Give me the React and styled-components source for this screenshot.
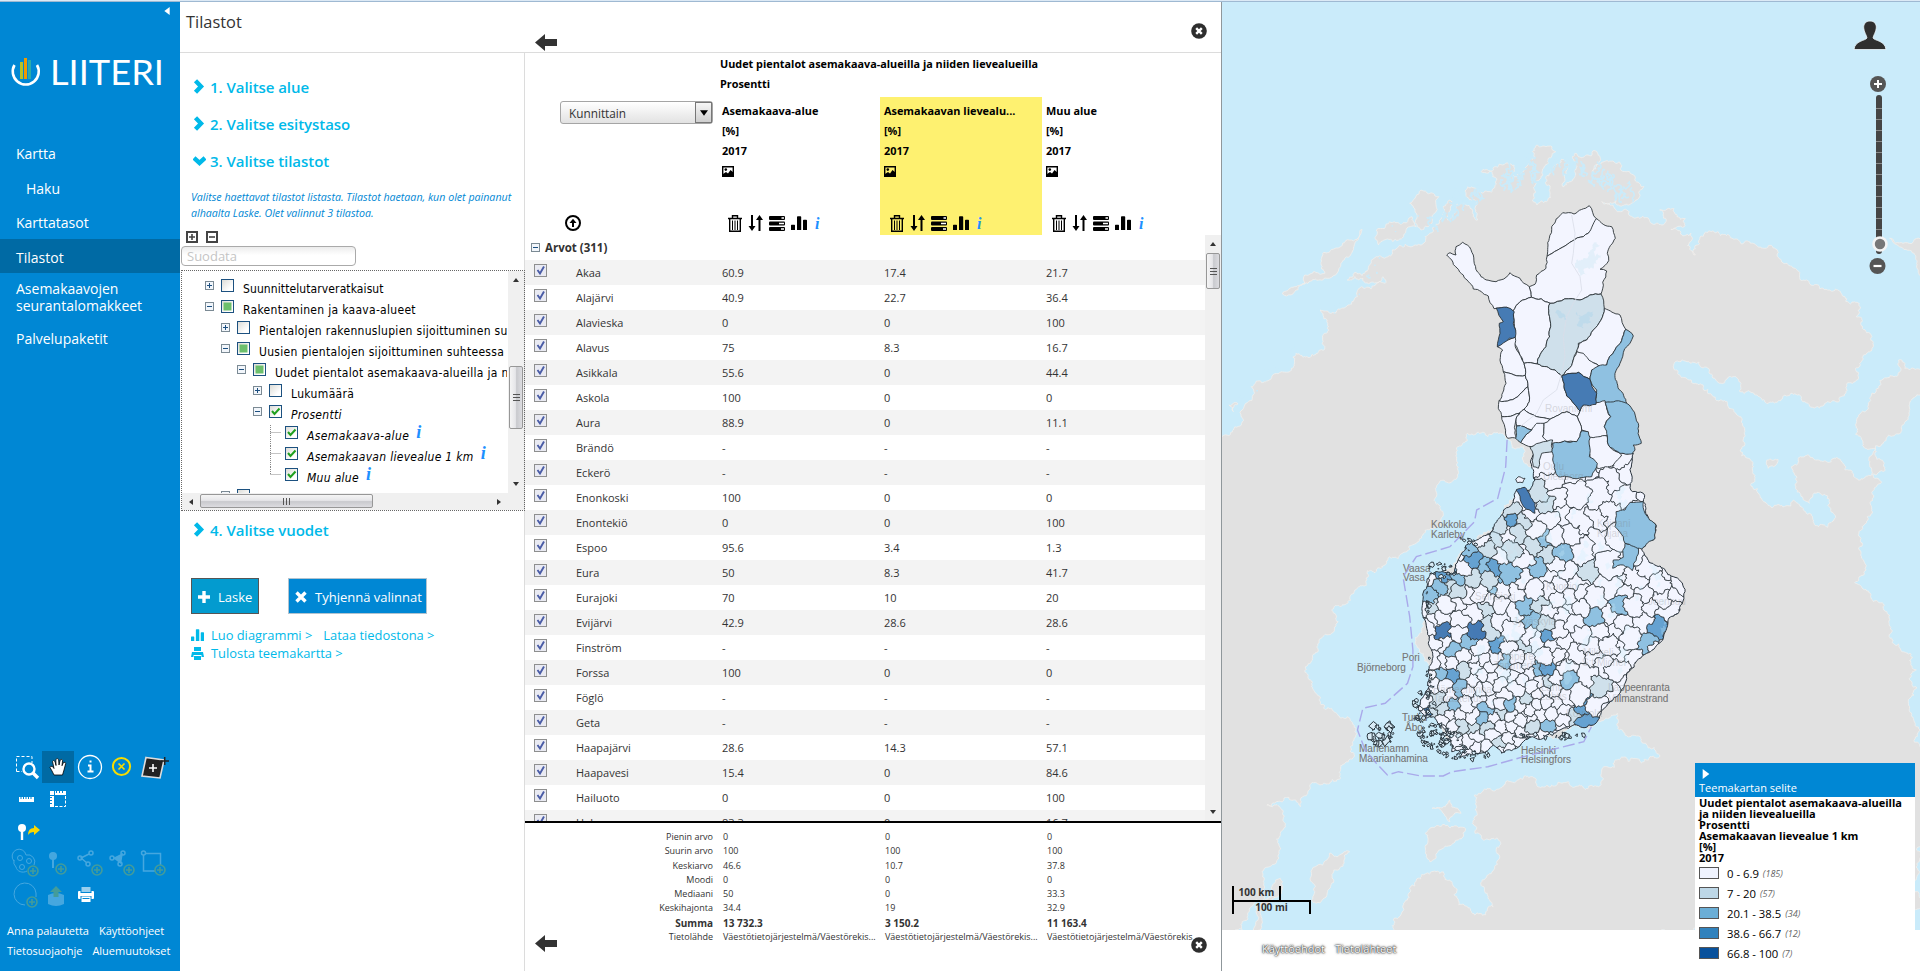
import React from "react";
import styled, { createGlobalStyle, css } from "styled-components";

const BLUE = "#0087d4";
const CYAN = "#00b9e9";
const SANS = '"Open Sans", "Noto Sans", sans-serif';

const Global = createGlobalStyle`
  * { box-sizing: border-box; }
  body { margin: 0; font-family: ${SANS}; background: #fff; overflow: hidden; }
`;

/* ---------- page frame ---------- */
const Page = styled.div`
  width: 1920px; height: 971px; display: flex; flex-direction: column; overflow: hidden;
`;
const TopStrip = styled.div`
  height: 2px; flex: none; background: #dce9f5; border-bottom: 1px solid #9fb9d2;
`;
const Columns = styled.div`display: flex; height: 969px;`;

/* ---------- sidebar ---------- */
const Sidebar = styled.aside`
  width: 180px; height: 100%; background: ${BLUE}; color: #fff; display: flex; flex-direction: column; flex: none;
`;
const Collapse = styled.div`
  height: 18px; padding: 5px 9px 0 0; display: flex; justify-content: flex-end;
`;
const Logo = styled.div`height: 116px; padding: 37px 0 0 11px; svg { overflow: visible; }`;
const NavItem = styled.div`
  height: ${(p) => p.$h || 34}px; flex: none; display: flex; align-items: center;
  padding-left: ${(p) => (p.$sub ? 26 : 16)}px; font-size: 14px; line-height: 17px; white-space: pre-line;
  background: ${(p) => (p.$active ? "#006aa4" : "transparent")};
  padding-top: ${(p) => (p.$active ? 2 : 0)}px;
`;
const Tools = styled.div`
  margin-top: auto; padding-left: 10px; display: grid; grid-template-columns: repeat(5, 32px); grid-auto-rows: 32px;
`;
const Tool = styled.div`
  background: ${(p) => (p.$active ? "#006aa4" : "transparent")}; opacity: ${(p) => (p.$off ? 0.27 : 1)};
  svg { display: block; overflow: visible; }
`;
const FootLinks = styled.div`
  height: 60px; padding: 10px 0 0 7px; font-size: 11px; line-height: 20px; white-space: nowrap;
  span { margin-right: 10px; }
`;

/* ---------- statistics panel ---------- */
const Work = styled.main`
  width: 1042px; flex: none; display: flex; flex-direction: column; border-right: 1px solid #8f979b; background: #fff;
`;
const WorkHead = styled.header`
  height: 51px; flex: none; border-bottom: 1px solid #dcdcdc; display: flex; color: #333;
`;
const Title = styled.h1`
  margin: 0; width: 345px; padding: 8px 0 0 6px; font-size: 16.4px; line-height: 24px; font-weight: 400;
`;
const HeadIcons = styled.div`
  flex: 1; display: flex; justify-content: space-between; padding: 21px 14px 0 10px;
  svg:first-child { margin-top: 11px; }
`;
const WorkBody = styled.div`display: flex; flex: 1; min-height: 0;`;
const Steps = styled.section`
  width: 345px; flex: none; border-right: 1px solid #dcdcdc; padding-top: 15px; display: flex; flex-direction: column;
`;
const Step = styled.div`
  height: ${(p) => p.$h || 37}px; padding-left: 13px; display: flex; align-items: center; gap: 4px; flex: none;
  font-size: 15px; font-weight: 600; letter-spacing: -0.05px; color: ${CYAN};
`;
const Hint = styled.p`
  margin: 9px 0 0; padding-left: 11px; font-size: 10.65px; line-height: 16px; font-style: italic; color: ${BLUE}; white-space: nowrap;
`;
const TreeTools = styled.div`display: flex; gap: 8px; padding: 10px 0 4px 6px; height: 25px;`;
const Filter = styled.div`
  width: 175px; height: 20px; margin-left: 1px; border: 1px solid #aaa; border-radius: 4px; flex: none;
  background: linear-gradient(#ececec, #fff 8px); color: #c4c4c4; font-size: 13px; line-height: 18px; padding-left: 5px;
`;
const Tree = styled.div`
  margin: 4px 0 0 1px; width: 344px; height: 241px; flex: none; border: 1px dotted #666;
  display: grid; grid-template-columns: 1fr 16px; grid-template-rows: 222px 1fr; overflow: hidden;
`;
const TreeRows = styled.div`overflow: hidden; padding: 7px 0 0; width: 325px;`;
const TreeRow = styled.div`
  height: 21px; display: flex; align-items: flex-start; padding-left: ${(p) => 23 + p.$level * 16}px; white-space: nowrap;
  font-family: "DejaVu Sans Condensed", "DejaVu Sans", sans-serif; font-size: 12px; line-height: 21px; color: #000;
`;
const Branch = styled.span`
  width: 16px; height: 21px; flex: none; display: flex;
`;
const TreeText = styled.span`
  margin: 1px 0 0 9px; font-style: ${(p) => (p.$it ? "italic" : "normal")}; letter-spacing: ${(p) => p.$track}px;
`;
const Check = styled.span`
  width: 13px; height: 13px; margin-top: 1px; border: 1px solid #1c5180; flex: none; display: flex;
  background: linear-gradient(135deg, #dcdcd7, #fff 75%);
`;
const Info = styled.i`
  font-family: "Liberation Serif", serif; font-weight: 700; font-size: ${(p) => p.$s || 18}px; color: #1e90ff; line-height: 15px;
`;
const TreeInfo = styled(Info)`margin-left: 7px;`;

const VBar = styled.div`
  background: #f0f0f0; display: flex; flex-direction: column; align-items: center; width: 16px; position: relative;
  justify-content: space-between; padding: 6px 0;
`;
const HBar = styled.div`
  background: #f0f0f0; display: flex; align-items: center; justify-content: space-between; padding: 0 6px; position: relative;
  grid-column: 1 / -1;
  padding-right: 22px;
`;
const Thumb = styled.div`
  position: absolute; border: 1px solid #979797; border-radius: 2px; display: flex; align-items: center; justify-content: center;
  ${(p) =>
    p.$v
      ? css`left: 1px; width: 14px; top: ${p.$at}px; height: ${p.$len}px; background: linear-gradient(90deg, #f5f5f5, #e6e6e9 45%, #c9cace 55%, #dcdce0);`
      : css`top: 1px; height: 14px; left: ${p.$at}px; width: ${p.$len}px; background: linear-gradient(#f5f5f5, #e6e6e9 45%, #c9cace 55%, #dcdce0);`}
`;

const Actions = styled.div`display: flex; gap: 29px; padding: 30px 0 0 11px;`;
const Button = styled.div`
  height: 36px; width: ${(p) => p.$w}px; display: flex; align-items: center; gap: ${(p) => p.$gap}px; padding: 1px 0 0 6px;
  color: #fff; font-size: 13px; white-space: nowrap; flex: none;
  background: ${(p) => (p.$primary ? "#039bcf" : BLUE)}; border: 1px solid ${(p) => (p.$primary ? "#555" : "#b0c3d0")};
`;
const Links = styled.div`padding: 12px 0 0 11px; color: ${CYAN}; font-size: 12.9px; line-height: 18px;`;
const LinkRow = styled.div`
  display: flex; align-items: center; gap: 7px; height: 18px; white-space: nowrap;
  span + span { margin-left: 4px; }
`;

/* ---------- table ---------- */
const Table = styled.section`width: 696px; display: flex; flex-direction: column; color: #333;`;
const Group = styled.div`
  height: 44px; padding: 1px 0 0 195px; font-size: 10.85px; font-weight: 700; color: #000; line-height: 20px; white-space: nowrap;
`;
const HeadRow = styled.div`display: grid; grid-template-columns: 193px 162px 162px 163px; height: 138px;`;
const FirstCell = styled.div`
  padding: 4px 0 3px 35px; display: flex; flex-direction: column; justify-content: space-between;
`;
const Select = styled.div`
  width: 153px; height: 23px; border: 1px solid #a5a5a5; border-radius: 3px; font-size: 11.8px; color: #333; padding-left: 8px;
  display: flex; align-items: center; justify-content: space-between; background: linear-gradient(#fff, #e2e2e2);
`;
const SelectBtn = styled.span`
  width: 17px; height: 21px; border: 1px solid #777; background: linear-gradient(#f6f6f6, #cfcfcf);
  display: flex; align-items: center; justify-content: center;
`;
const ColHead = styled.div`
  padding: 4px 4px 0; font-size: 10.9px; font-weight: 700; line-height: 20px; color: #000;
  background: ${(p) => (p.$hot ? "#fef170" : "transparent")};
  div { white-space: nowrap; }
  & > svg { display: block; margin-top: 5px; }
`;
const ColTools = styled.div`
  display: flex; align-items: center; gap: 6px; padding-left: 6px; margin-top: 37px; height: 18px;
  i { margin-left: 2px; }
`;
const ListWrap = styled.div`display: flex; height: 586px; overflow: hidden;`;
const List = styled.div`flex: 1; overflow: hidden;`;
const GroupRow = styled.div`
  height: 25px; display: flex; align-items: center; gap: 5px; padding-left: 6px; font-size: 11.5px; font-weight: 700; color: #333;
`;
const Row = styled.div`
  height: 25px; display: grid; grid-template-columns: 51px 146px 162px 162px 1fr; align-items: center; font-size: 11px;
  background: ${(p) => (p.$odd ? "#f3f3f3" : "#fff")}; line-height: 25px;
`;
const RowCheck = styled.span`
  width: 13px; height: 13px; margin: -5px 0 0 9px; border: 1px solid #8e8f8f; background: #e9eaf2; display: flex;
`;
const Stats = styled.div`
  border-top: 2px solid #000; height: 148px; padding-top: 7px; display: flex; flex-direction: column; position: relative;
`;
const Stat = styled.div`
  display: grid; grid-template-columns: 188px 162px 162px 1fr; column-gap: 0; height: 14.3px; line-height: 14.3px; font-size: 9px;
  font-weight: ${(p) => (p.$b ? 700 : 400)}; ${(p) => p.$b && "font-size: 10px;"}
  white-space: nowrap;
  span { padding-left: 10px; }
  span:first-child { text-align: right; padding-left: 0; }
`;
const StatIcon = styled.div`
  position: absolute; top: ${(p) => p.$y}px; ${(p) => (p.$right ? "right: 14px;" : "left: 10px;")}
  svg { display: block; }
`;

/* ---------- map ---------- */
const MapPane = styled.section`width: 698px; height: 969px; position: relative; overflow: hidden; background: #fff;`;
const MapSvg = styled.svg`display: block;`;
const Over = styled.div`position: absolute; ${(p) => p.$pos}`;
const Legend = styled(Over)`width: 220px; height: 208px; background: #fff; color: #000;`;
const LegendHead = styled.div`
  background: ${BLUE}; color: #fff; height: 34px; font-size: 11px; padding: 6px 0 0 4px; line-height: 14px;
  svg { display: block; margin: 0 0 2px 2px; height: 10px; }
`;
const LegendTitle = styled.div`padding: 0 0 0 4px; font-size: 11px; font-weight: 700; line-height: 11px; height: 66px; white-space: pre;`;
const LegendRow = styled.div`
  height: 20px; display: flex; align-items: center; padding-left: 4px; font-size: 11.3px; gap: 4px;
  i { font-size: 9px; color: #666; }
`;
const Swatch = styled.span`width: 20px; height: 12px; border: 1px solid #555; background: ${(p) => p.$c}; margin-right: 4px;`;
const ScaleKm = styled.div`
  width: 49px; height: 14px; border: solid #000; border-width: 0 2px; font-size: 10px; font-weight: 700; text-align: center; line-height: 13px; color: #333;
`;
const ScaleMi = styled(ScaleKm)`width: 79px; border-width: 2px 2px 0; line-height: 11px;`;
const MapLinks = styled(Over)`
  display: flex; gap: 10px; font-size: 11px; line-height: 14px; color: #fff;
  text-shadow: 0 0 1px #222, 0 0 2px #333, 0 0 3px #666;
`;

/* ---------- icons ---------- */
const Tri = ({ d, c = "#333", s = 6 }) => (
  <svg width={s} height={s} viewBox="0 0 6 6">
    <path d={{ up: "M0 5L3 1L6 5Z", down: "M0 1L3 5L6 1Z", left: "M5 0L1 3L5 6Z", right: "M1 0L5 3L1 6Z" }[d]} fill={c} />
  </svg>
);
const Grip = ({ v }) => (
  <svg width="9" height="9" viewBox="0 0 9 9" stroke="#555">
    <path d={v ? "M1 1.5H8M1 4.5H8M1 7.5H8" : "M1.5 1V8M4.5 1V8M7.5 1V8"} />
  </svg>
);
const BackArrow = () => (
  <svg width="22" height="17" viewBox="0 0 22 17"><path d="M0 8.5L10 0V5H22V12H10V17Z" fill="#333" /></svg>
);
const CloseIcon = () => (
  <svg width="16" height="16" viewBox="0 0 16 16">
    <circle cx="8" cy="8" r="7.8" fill="#2e2e2e" />
    <path d="M5.2 5.2L10.8 10.8M10.8 5.2L5.2 10.8" stroke="#fff" strokeWidth="2.4" />
  </svg>
);
const Chevron = ({ down }) => (
  <svg width="13" height="15" viewBox="0 0 13 15" fill="none" stroke={CYAN} strokeWidth="4.4">
    <path d={down ? "M1 4L6.5 9L12 4" : "M2.5 1.8L8 7.5L2.500 13.2"} />
  </svg>
);
const Expander = ({ open, s = 9 }) => (
  <svg width={s} height={s} viewBox="0 0 9 9" fill="none">
    <rect x=".5" y=".5" width="8" height="8" fill="#f2f6fb" stroke="#7b8a94" />
    <path d={open ? "M2 4.5H7" : "M2 4.5H7M4.5 2V7"} stroke="#1c4f80" />
  </svg>
);
const BoxBtn = ({ minus }) => (
  <svg width="12" height="12" viewBox="0 0 12 12" fill="none" stroke="#444" strokeWidth="2">
    <path d="M1 1H11V11H1Z" /><path d={minus ? "M3 6H9" : "M3 6H9M6 3V9"} strokeWidth="1.6" />
  </svg>
);
const ChartIcon = ({ c = "#000", w = 16, h = 16 }) => (
  <svg width={w} height={h} viewBox="0 0 16 16" preserveAspectRatio="none" fill={c}>
    <path d="M0 10.5q0-.5.5-.5h3q.5 0 .5.5V16H0zM6 1q0-.8.8-.8h2.600q.8 0 .8.8V16H6zM12 5q0-.8.8-.8h2.400q.8 0 .8.8V16H12z" />
  </svg>
);
const PrintIcon = ({ c }) => (
  <svg width="13" height="13" viewBox="0 0 13 13" fill={c}>
    <path d="M3 0H10V4H3ZM1 5H12L13 10H10.500V8H2.500V10H0ZM3 9H10V13H3Z" />
  </svg>
);
const ImgIcon = () => (
  <svg width="12" height="11" viewBox="0 0 12 11">
    <path d="M.7.7H11.300V10.300H.7Z" fill="none" stroke="#000" strokeWidth="1.4" />
    <circle cx="3.800" cy="3.600" r="1.300" /><path d="M1 10V8L4 6L6 7.500L8.500 4L11.500 6.500V10Z" />
  </svg>
);
const TrashIcon = () => (
  <svg width="14" height="17" viewBox="0 0 14 17" fill="none" stroke="#000">
    <path d="M0 3.500H14M4.500 3V.7H9.500V3" strokeWidth="1.400" /><path d="M1.700 4V16.300H12.300V4" strokeWidth="1.400" />
    <path d="M4.500 5.500V15M7 5.500V15M9.500 5.500V15" />
  </svg>
);
const SortIcon = () => (
  <svg width="15" height="16" viewBox="0 0 15 16">
    <path d="M4 0V13M11.500 3V16" stroke="#000" strokeWidth="2" /><path d="M.5 11H7.500L4 16ZM8 5H15L11.500 0Z" />
  </svg>
);
const BarsIcon = () => (
  <svg width="16" height="15" viewBox="0 0 16 15">
    <rect width="16" height="4" rx="1" /><rect y="5.500" width="16" height="4" rx="1" /><rect y="11" width="16" height="4" rx="1" />
    <path d="M12.500 1.200h2.500v1.600h-2.500zM10 6.700h5v1.600H10zM12 12.200h3v1.600h-3z" fill="#fff" />
  </svg>
);
const UpCircle = () => (
  <svg width="16" height="16" viewBox="0 0 16 16" fill="none" stroke="#000" strokeWidth="2">
    <circle cx="8" cy="8" r="7" /><path d="M8 12V6" /><path d="M4.500 8L8 3.800L11.500 8Z" fill="#000" stroke="none" />
  </svg>
);
const Plus = ({ x = 24, y = 23 }) => (
  <g stroke="#f7d400" fill="none" strokeWidth="1.600"><circle cx={x} cy={y} r="5" /><path d={`M${x - 3} ${y}h6M${x} ${y - 3}v6`} /></g>
);
const W = { fill: "none", stroke: "#fff" };

const toolIcons = [
  { el: <><path d="M6.500 20.500V5.500H22V12" strokeDasharray="3 2" {...W} /><path d="M6.500 20.500H12" strokeDasharray="3 2" {...W} /><circle cx="19" cy="18" r="5.500" {...W} strokeWidth="2.400" /><path d="M23 22L28 27" {...W} strokeWidth="3.400" /></> },
  { on: 1, el: <path d="M12 24L10 20L8 16.500Q8.500 14.500 10.500 15.500L12 17.500L10.500 10.500Q11.500 8.500 13 10.500L14 14.500L13.800 8.500Q15.200 6.500 16.600 8.500L17 14L18.200 9Q19.800 7.500 20.600 9.500L20 14.700L21.500 11.500Q23.500 10.500 23.700 12.500L22 19L20.500 24Z" fill="#fff" stroke="#000" strokeWidth=".8" /> },
  { el: <><circle cx="16" cy="16" r="11.500" {...W} strokeWidth="1.300" /><path d="M16.500 9.500V11.500M14 14.500H16.500V20.500M13.500 20.500H19.500" {...W} strokeWidth="2" /></> },
  { el: <g stroke="#f7dc00" fill="none" strokeWidth="2"><circle cx="15.500" cy="15.500" r="8.600" /><path d="M12.500 12.500L18.500 18.500M18.500 12.500L12.500 18.500" strokeWidth="1.700" /></g> },
  { el: <><path d="M8 6.500L26 9L22 27L4 25Z" fill="#222" stroke="#ddd" strokeWidth="1.600" /><path d="M11 17H19M15 13V21" {...W} strokeWidth="1.600" /><path d="M22.500 10H31M26.700 6V14" stroke="#222" strokeWidth="1.500" /></> },
  { el: <path d="M9 14h1.500v2h1v-2h1.500v2h1v-2h1.500v2h1v-2H18v2h1v-2h1.500v2h1v-2H24v5H9z" fill="#fff" /> },
  { el: <><path d="M8 8h4v4H8zM13 8h1v2h1V8h2v2h1V8h2v2h1V8h3v4H13zM8 13v1h2v1H8v2h2v1H8v2h2v1H8v3h4V13z" fill="#fff" /><path d="M23.500 13V23.500H12" strokeDasharray="3 1.500" {...W} /></> },
  {}, {}, {},
  { el: <><circle cx="12" cy="13" r="4" fill="#fff" /><path d="M12 16V25" {...W} strokeWidth="2.400" /><path d="M18 20Q18 13 24 13V10L30 15L24 20V17Q20 17 18 20Z" fill="#fbd800" /></> },
  {}, {}, {}, {},
  { off: 1, el: <><g {...W}><path d="M4 14A7 7 0 1 1 16 8A7 7 0 0 1 24 18M4 13A7 7 0 0 0 6 20A7 6 0 0 0 17 24" /><circle cx="10" cy="11" r="2.500" /><circle cx="19" cy="14" r="2.500" /><circle cx="12" cy="20" r="2.500" /></g><Plus x={23} y={24} /></> },
  { off: 1, el: <><circle cx="11" cy="9" r="4" fill="#fff" /><path d="M11 12V21" {...W} strokeWidth="2" /><Plus x={19} y={22} /></> },
  { off: 1, el: <><g {...W} strokeWidth="1.500"><path d="M15 7L7 11L13 16" /><circle cx="17" cy="6" r="2" /><circle cx="6" cy="11" r="2" /><circle cx="14" cy="17" r="2" /></g><Plus x={23} y={23} /></> },
  { off: 1, el: <><path d="M7 11L17 6L15 17Z" fill="#fff" /><g {...W} strokeWidth="1.500"><circle cx="17" cy="6" r="2" /><circle cx="6" cy="11" r="2" /><circle cx="14" cy="17" r="2" /></g><Plus x={23} y={23} /></> },
  { off: 1, el: <><g {...W} strokeWidth="1.500"><path d="M7 6.500H22.500V18M5.500 8V24H17" /><circle cx="5.500" cy="6" r="2" /></g><Plus x={22} y={23} /></> },
  { off: 1, el: <><path d="M15 26A11 11 0 1 1 26 14V18" {...W} /><Plus x={22} y={23} /></> },
  { off: 1, el: <><path d="M6 16Q14 12 22 16V25Q14 29 6 25Z" fill="#fff" /><path d="M14 7L20 13H16.500V18H11.500V13H8Z" fill="#f7d400" /></> },
  { el: <g transform="translate(4 8)"><path d="M3.500 0H12.500V5H3.500Z" fill="#99cfee" /><path d="M0 5Q0 4 1 4H2.500V6H13.500V4H15Q16 4 16 5V11Q16 12 15 12H13.500V9H2.500V12H1Q0 12 0 11Z" fill="#fff" /><path d="M3.500 9.500H12.500V15H3.500Z" fill="#fff" /><path d="M4.500 11.500H11.500" stroke={BLUE} /></g> },
];

/* ---------- data ---------- */
const tree = [
  [0, "+", "", "Suunnittelutarveratkaisut", 0, 0, 0.1],
  [0, "-", "h", "Rakentaminen ja kaava-alueet"],
  [1, "+", "", "Pientalojen rakennuslupien sijoittuminen su"],
  [1, "-", "h", "Uusien pientalojen sijoittuminen suhteessa"],
  [2, "-", "h", "Uudet pientalot asemakaava-alueilla ja n"],
  [3, "+", "", "Lukumäärä", 0, 0, 0.35],
  [3, "-", "v", "Prosentti", 1],
  [4, "", "v", "Asemakaava-alue", 1, 1, 0.4],
  [4, "", "v", "Asemakaavan lievealue 1 km", 1, 1],
  [4, "", "v", "Muu alue", 1, 1],
  [1, "+", "", ""],
];
const rows = `Akaa|60.9|17.4|21.7
Alajärvi|40.9|22.7|36.4
Alavieska|0|0|100
Alavus|75|8.3|16.7
Asikkala|55.6|0|44.4
Askola|100|0|0
Aura|88.9|0|11.1
Brändö|-|-|-
Eckerö|-|-|-
Enonkoski|100|0|0
Enontekiö|0|0|100
Espoo|95.6|3.4|1.3
Eura|50|8.3|41.7
Eurajoki|70|10|20
Evijärvi|42.9|28.6|28.6
Finström|-|-|-
Forssa|100|0|0
Föglö|-|-|-
Geta|-|-|-
Haapajärvi|28.6|14.3|57.1
Haapavesi|15.4|0|84.6
Hailuoto|0|0|100
Halsua|83.3|0|16.7`.split("\n").map((l) => l.split("|"));
const src = "Väestötietojärjestelmä/Väestörekis";
const stats = [
  ["Pienin arvo", "0", "0", "0"],
  ["Suurin arvo", "100", "100", "100"],
  ["Keskiarvo", "46.6", "10.7", "37.8"],
  ["Moodi", "0", "0", "0"],
  ["Mediaani", "50", "0", "33.3"],
  ["Keskihajonta", "34.4", "19", "32.9"],
  ["Summa", "13 732.3", "3 150.2", "11 163.4"],
  ["Tietolähde", src + "...", src + "...", src],
];
const legend = [
  ["#eff3ff", "0 - 6.9", "(185)"],
  ["#bdd7e7", "7 - 20", "(57)"],
  ["#6baed6", "20.1 - 38.5", "(34)"],
  ["#3182bd", "38.6 - 66.7", "(12)"],
  ["#08519c", "66.8 - 100", "(7)"],
];

/* ---------- map geometry ---------- */
const rng = (s) => () => {
  s = (s + 0x6d2b79f5) | 0;
  let t = Math.imul(s ^ (s >>> 15), 1 | s);
  t = (t + Math.imul(t ^ (t >>> 7), 61 | t)) ^ t;
  return ((t ^ (t >>> 14)) >>> 0) / 4294967296;
};
const parse = (str, f) =>
  str.trim().split(/\s+/).map((p) => { const [x, y] = p.split(",").map(Number); return f(x, y); });
const wide = (x, y) => [1220 + x / 2.24, y / 3];
const north = (x, y) => [1420 + x / 3, 190 + y / 3];
const south = (x, y) => [1380 + x / 3, 470 + y / 3];
const line = (pts) => "M" + pts.map((p) => p[0].toFixed(1) + " " + p[1].toFixed(1)).join("L");

// Irregular edge between two points; both directions give the same curve.
function edge(a, b, amp, min) {
  const flip = a[0] > b[0] || (a[0] === b[0] && a[1] > b[1]);
  const [p, q] = flip ? [b, a] : [a, b];
  const r = rng(Math.round(p[0] * 7 + p[1] * 131 + q[0] * 17 + q[1] * 311));
  const rec = (u, v) => {
    const dx = v[0] - u[0], dy = v[1] - u[1], d = Math.hypot(dx, dy);
    if (d < min) return [v];
    const k = (r() - 0.5) * amp;
    const m = [(u[0] + v[0]) / 2 - dy * k, (u[1] + v[1]) / 2 + dx * k];
    return [...rec(u, m), ...rec(m, v)];
  };
  const out = [p, ...rec(p, q)];
  return flip ? out.reverse() : out;
}
const rough = (pts, amp, min, closed = true) => {
  const res = [];
  const n = closed ? pts.length : pts.length - 1;
  for (let i = 0; i < n; i++) res.push(...edge(pts[i], pts[(i + 1) % pts.length], amp, min).slice(0, -1));
  return line(res) + (closed ? "Z" : "");
};

const mainland = `4,1310 30,1290 50,1230 70,1160 110,1140 160,1105 170,1060 235,1040 240,960 225,930 300,900 325,865 370,850 365,830 320,835 285,840 300,820 350,770 400,740 430,740 460,725 480,680 500,620 515,600 510,660 540,610 560,625 577,660 570,600 550,590 555,560 600,575 620,540 585,515 640,490 660,505 655,535 670,520 690,495 700,455 730,440 752,455 735,490 700,600 710,615 740,520 765,478 775,482 768,560 795,530 800,500 795,460 840,452 848,490 835,520 870,485 910,515 950,560 940,590 915,615 855,605 890,635 940,655 990,675 1000,660 985,630 1042,655 1040,680 1010,688 1055,700 1065,765 1075,715 1200,735 1270,790 1300,840 1340,855 1400,890 1432,910 1425,950 1460,1010 1460,1050 1430,1130 1360,1205 1310,1205 1265,1185 1200,1185 1150,1130 1120,1150 1050,1085 1020,1085 1060,1150 1120,1200 1170,1270 1175,1290 1165,1350 1195,1400 1190,1450 1210,1490 1240,1520 1320,1540 1340,1580 1375,1560 1365,1500 1330,1480 1320,1510 1290,1460 1280,1400 1300,1370 1340,1380 1400,1410 1470,1425 1490,1410 1480,1380 1440,1330 1425,1270 1430,1250 1460,1180 1510,1130 1520,1080 1600,1100 1600,2800 388,2800 390,2755 420,2700 440,2640 500,2615 520,2650 535,2715 570,2745 612,2720 615,2600 628,2525 590,2520 565,2470 575,2420 570,2385 640,2345 700,2330 780,2345 850,2358 855,2310 900,2270 960,2280 985,2270 950,2230 895,2190 890,2140 860,2160 835,2180 740,2210 640,2240 560,2250 500,2200 470,2130 470,2000 470,1850 465,1750 520,1700 560,1640 650,1500 705,1470 700,1400 680,1340 640,1315 600,1310 555,1300 530,1380 485,1460 500,1540 440,1630 380,1670 300,1780 250,1830 250,1900 220,1950 205,2060 225,2110 250,2125 285,2150 300,2220 300,2260 280,2290 235,2350 200,2370 180,2420 105,2415 140,2440 135,2500 95,2630 100,2660 70,2720 50,2790 4,2800`;
const islets = [
  "205,2700 205,2620 245,2560 290,2555 255,2610 240,2680 215,2710",
  "460,2500 475,2482 530,2478 550,2490 545,2510 500,2545 470,2585 465,2530",
  "475,2425 505,2420 515,2400 535,2430 540,2440 515,2465 500,2440",
  "75,2790 120,2680 135,2635 138,2680 90,2790",
  "1500,715 1530,730 1600,735 1600,880 1565,820 1555,760",
  "140,882 190,825 235,820 230,760 270,740 318,688 300,740 270,800 240,835 190,850",
  "440,640 425,610 450,570 490,590 480,640 450,690",
  "350,690 380,665 430,650 440,680 400,720 355,735",
  "1225,1380 1250,1378 1240,1400 1228,1405", "20,1215 40,1212 30,1235",
];

const FILL = { w: "#f3f5ff", a: "#cfe0eb", b: "#8fc1e1", c: "#66a2d1", d: "#467bb4" };
const northern = `w 381,199 388,145 395,110 428,68 462,72 508,47 529,86 515,120 505,130
w 381,199 505,130 529,86 575,110 586,145 562,190 566,212 540,238 560,243 543,312 480,330 390,340 334,322 328,290 345,283 350,255 378,235
w 334,322 328,290 300,265 270,248 258,262 228,275 183,260 160,195 142,165 128,157 108,170 108,195 90,188 80,195 95,210 130,255 160,297 205,318 222,356 260,352 280,362 300,335
w 280,362 300,335 334,322 390,340 386,370 392,410 378,470 352,522 312,520 290,470 283,400
a 390,340 480,330 543,312 553,355 520,420 500,450 475,460 457,520 425,558 380,530 352,522 378,470 392,410 386,370
w 553,355 600,375 617,418 585,480 560,525 540,532 510,515 470,485 478,460 500,450 520,420
w 470,485 490,490 515,515 540,532 515,540 510,568 475,547 425,558 457,520
b 617,418 640,438 600,520 585,550 620,640 565,637 528,640 530,600 510,568 515,540 560,525 585,480
w 286,442 290,480 312,520 316,556 250,545 240,510 248,480 232,470
w 250,545 316,556 324,590 270,630 237,632 258,580
w 237,632 270,630 324,590 328,635 312,658 245,680 235,655
w 312,520 352,522 380,530 425,558 432,590 440,618 480,663 472,680 440,665 390,688 312,658 328,635 324,590 316,556
w 480,663 490,645 555,632 572,680 553,710 565,738 505,742 500,725 485,720 472,680
d 229,354 260,352 283,365 280,400 286,442 268,445 232,470 240,430 238,400 250,395
d 425,558 475,547 510,568 530,610 528,643 490,645 480,663 440,618 432,590
w 245,680 312,658 290,680 290,745 263,745
w 290,680 312,658 390,688 350,710 335,720 290,708
w 335,720 350,700 372,700 368,740 398,745 335,770 302,758
w 390,688 440,665 472,680 485,720 470,755 400,760 368,740 372,700
b 290,708 335,720 302,758 287,745
a 330,772 370,755 398,750 397,785 365,790 355,835 340,830 340,795
w 505,742 562,738 570,772 605,795 580,825 532,835 510,800
b 398,760 470,755 485,722 505,725 508,800 532,820 515,860 415,860 405,840 398,810
b 555,637 620,640 655,700 664,760 640,765 645,780 635,792 600,790 570,772 562,738 553,710 572,680`.split("\n");

const southOutline = parse(
  `455,-10 475,-60 640,-90 760,-50 755,15 757,65 790,70 790,95 797,130 828,165 825,205 785,237 850,295 885,322 915,365 900,420 860,475 800,550 735,640 690,695 640,765 590,765 540,780 490,805 430,815 380,840 365,850 340,825 300,850 240,865 262,835 215,845 200,790 160,740 115,720 130,680 147,650 145,600 145,520 135,450 130,380 150,310 220,310 240,260 290,210 350,155 400,90 410,60 450,60 465,30`,
  south
);
const tinted = {
  d: "187,490 285,485 140,742",
  c: "282,270 347,290 350,525 212,622 500,595 505,505 617,700 830,475 195,322 400,148 625,762",
  b: "232,315 390,315 345,352 312,290 495,205 542,250 475,290 435,408 645,440 722,405 795,520 268,510 218,545 475,600 562,630 240,655 220,710 320,715 390,703 305,745 505,768 145,378 180,350 268,230 180,618 375,575 455,450",
  a: "395,125 355,165 420,155 410,190 345,215 385,240 325,235 460,230 500,255 620,300 280,320 325,325 205,350 155,410 315,420 325,470 485,405 500,460 425,525 250,600 660,645 505,640 170,690 440,685 365,730 275,775 325,775 240,765 360,820 455,770 585,745 490,105 465,75 230,365 155,740 185,720",
};

function voronoi() {
  const seeds = [];
  Object.entries(tinted).forEach(([k, s]) => parse(s, (x, y) => [x, y]).forEach((p) => seeds.push([...p, k])));
  const r = rng(42);
  for (let i = 0; i < 9000; i++) {
    const x = 100 + r() * 830, y = -90 + r() * 960;
    const base = y < 80 ? 56 : y < 330 ? (x > 560 ? 60 : 36) : y < 560 ? (x > 600 ? 42 : 34) : x > 560 ? 40 : 26;
    const gap = base * (0.72 + r() * 0.6);
    if (seeds.every((s) => Math.hypot(s[0] - x, (s[1] - y) * 0.8) > gap)) seeds.push([x, y, "w"]);
  }
  return seeds.map((s) => {
    let poly = [[50, -120], [960, -120], [960, 900], [50, 900]];
    for (const o of seeds) {
      const dx = o[0] - s[0], dy = o[1] - s[1];
      if (o === s || Math.hypot(dx, dy) > 220) continue;
      const mx = (o[0] + s[0]) / 2, my = (o[1] + s[1]) / 2;
      const side = (p) => (p[0] - mx) * dx + (p[1] - my) * dy;
      const next = [];
      poly.forEach((p, i) => {
        const q = poly[(i + 1) % poly.length], a = side(p), b = side(q);
        if (a <= 0) next.push(p);
        if (a * b < 0) { const t = a / (a - b); next.push([p[0] + (q[0] - p[0]) * t, p[1] + (q[1] - p[1]) * t]); }
      });
      poly = next;
    }
    return { k: s[2], d: rough(poly.map(([x, y]) => south(Math.round(x), Math.round(y))), 0.75, 3) };
  });
}
const cells = voronoi();
const coast = rough(southOutline, 0.35, 3);

function skerries() {
  const r = rng(7);
  const zones = [[1425, 712, 13, 22, 26], [1436, 736, 20, 12, 46], [1452, 745, 18, 14, 26], [1382, 733, 12, 13, 30], [1440, 571, 16, 8, 20], [1428, 598, 3, 18, 10], [1429, 680, 3, 26, 14], [1467, 545, 9, 10, 8], [1550, 736, 42, 3, 22], [1468, 755, 22, 4, 16]];
  return zones.flatMap(([cx, cy, rx, ry, n], z) =>
    Array.from({ length: n }, () => {
      const a = r() * 6.28, q = Math.sqrt(r());
      const x = cx + Math.cos(a) * rx * q, y = cy + Math.sin(a) * ry * q, s = 0.4 + r() * (z === 3 ? 3.6 : 1.9);
      const pts = Array.from({ length: 6 }, (_, i) => [x + Math.cos(i * 1.05) * s * (0.2 + r() * 1.5), y + Math.sin(i * 1.05) * s * (0.2 + r() * 1.5)]);
      return line(pts) + "Z";
    })
  );
}
const skerryPaths = skerries();
const mainlandPath = rough(parse(mainland, wide), 0.6, 2);
const isletPaths = islets.map((s) => rough(parse(s, wide), 0.5, 2.5));
const fjords = (() => {
  const r = rng(19);
  const track = parse("50,1200 130,1110 220,1000 260,900 330,840 400,700 470,640 520,590 600,545 670,500 730,470 810,480 860,520 910,560", wide);
  return track.slice(0, -1).flatMap((p, i) =>
    Array.from({ length: 9 }, () => {
      const t = r(), q = track[i + 1];
      const x = p[0] + (q[0] - p[0]) * t + (r() - 0.5) * 16, y = p[1] + (q[1] - p[1]) * t + (r() - 0.5) * 16;
      const lx = (i < 6 ? 8 : 2) * (r() - 0.3), ly = i < 6 ? 5 * (r() - 0.5) : 10 + r() * 8;
      return rough([[x, y], [x + lx, y + ly]], 1, 2, false);
    })
  );
})();
const seaBorder = line(parse("643,1320 640,1400 622,1495 575,1530 570,1565 515,1640 440,1670 410,1730 425,1850 432,1950 432,2000 420,2050 370,2110 320,2125 308,2190 325,2250 350,2290 375,2325 400,2315 450,2328 500,2328 520,2315 600,2300 680,2270 740,2250 815,2225 832,2180", wide));
const places = [
  ["Kokkola", 1431, 528], ["Karleby", 1431, 538], ["Vaasa", 1403, 572], ["Vasa", 1403, 581], ["Pori", 1402, 661], ["Björneborg", 1357, 671],
  ["Turku", 1402, 721], ["Åbo", 1405, 731], ["Mariehamn", 1359, 752], ["Maarianhamina", 1359, 762], ["Helsinki", 1521, 754],
  ["Helsingfors", 1521, 763], ["Lappeenranta", 1608, 691], ["Villmanstrand", 1608, 702], ["Rovaniemi", 1545, 412], ["Oulu", 1543, 470],
  ["Uleåborg", 1543, 480], ["Kajaani", 1597, 527], ["Kajana", 1597, 537], ["Seinäjoki", 1475, 600], ["Kuopio", 1546, 590],
  ["Joensuu", 1648, 605], ["Jyväskylä", 1513, 625], ["Mikkeli", 1583, 656], ["S:t Michel", 1582, 666], ["Tampere", 1495, 660],
  ["Tammerfors", 1494, 669], ["Hämeenlinna", 1433, 693], ["Tavastehus", 1433, 702], ["Lahti", 1541, 691], ["Lahtis", 1540, 700], ["Kouvola", 1566, 717],
];
const Places = ({ opacity, list }) => (
  <g fontFamily="Liberation Sans, Arial, sans-serif" fontSize="10" fill="#777" opacity={opacity}>
    {list.map(([t, x, y]) => <text key={t} x={x} y={y}>{t}</text>)}
  </g>
);
const lakes = (() => {
  const r = rng(5);
  return Array.from({ length: 90 }, () => {
    const [x, y] = south(250 + r() * 600, 60 + r() * 640), s = 2 + r() * 5;
    return rough([[x, y], [x + s, y - s * r() * 2], [x + s * 1.4, y + s * r()], [x + s * 0.3, y + s * 1.6]], 0.9, 2);
  });
})();

function MapDrawing() {
  return (
    <MapSvg width="698" height="928" viewBox="1222 2 698 928">
      <defs><clipPath id="fin"><path d={coast} /></clipPath></defs>
      <rect x="1222" y="2" width="698" height="928" fill="#caebfa" />
      <g fill="#e1e1e1" stroke="#f1efec" strokeWidth=".8">
        <path d={mainlandPath} />
        {isletPaths.map((d, i) => <path key={i} d={d} />)}
      </g>
      <g fill="none" stroke="#caebfa" strokeWidth="1.500">{fjords.map((d, i) => <path key={i} d={d} />)}</g>
      <Places opacity="1" list={places.slice(0, 14)} />
      <path d={seaBorder} fill="none" stroke="#a9a9ea" strokeWidth="1.400" strokeDasharray="12 4" />
      <g clipPath="url(#fin)" stroke="#2b3338" strokeWidth=".8">
        {cells.map((c, i) => <path key={i} d={c.d} fill={FILL[c.k]} />)}
        <g fill="#caebfa" stroke="none" opacity=".28">{lakes.map((d, i) => <path key={i} d={d} />)}</g>
      </g>
      <path d={coast} fill="none" stroke="#28323c" strokeWidth="1" />
      <g stroke="#2b3338" strokeWidth=".9">
        <path d={rough(parse("408,60 435,52 450,75 465,100 465,130 440,118 425,100", south), 0.3, 4)} fill={FILL.d} />
        <path d={rough(parse("735,220 775,225 770,260 757,302 730,285 698,295 700,270 730,262", south), 0.3, 4)} fill={FILL.b} />
        <path d={rough(parse("750,97 790,95 795,130 828,165 825,205 785,237 735,220 730,200 705,170 708,125 735,120", south), 0.2, 4)} fill={FILL.b} />
        <path d={rough(parse("407,28 415,20 435,25 428,38 412,38", south), 0.3, 3)} fill={FILL.w} />
        {northern.map((l, i) => (
          <path key={i} d={rough(parse(l.slice(2), north), 0.22, 4)} fill={FILL[l[0]]} />
        ))}
      </g>
      <g fill="#dcedf8" opacity=".7">
        <path d={rough(parse("465,225 490,205 510,185 540,165 525,200 545,195 520,225 490,240 500,255 480,258", north), 0.8, 2)} />
        <path d={rough(parse("470,365 500,370 520,365 515,400 490,415 475,395", north), 0.8, 2)} fill="#b9d9ec" />
        <path d={rough(parse("410,360 435,375 440,390 425,385", north), 0.8, 2)} fill="#b9d9ec" />
      </g>
      <path d={line(parse("455,75 465,130 460,190 455,220 480,260 485,300 460,340 440,380 430,440 435,500 425,550 410,600 370,630 350,670 300,710", north))} fill="none" stroke="#d9dde8" strokeWidth=".8" />
      <g fill="#d9ebf6" stroke="#1f2a33" strokeWidth=".95">{skerryPaths.map((d, i) => <path key={i} d={d} />)}</g>
      <Places opacity=".24" list={places} />
    </MapSvg>
  );
}

const TreeCheck = ({ kind }) => (
  <Check>
    <svg width="11" height="11" viewBox="0 0 11 11">
      {kind === "h" && <rect x="1.500" y="1.500" width="8" height="8" fill="#6cbf6c" />}
      {kind === "v" && <path d="M2 5L4.500 8L9.500 2.500" fill="none" stroke="#1fa01f" strokeWidth="2" />}
    </svg>
  </Check>
);

export default function App() {
  return (
    <Page>
      <Global />
      <TopStrip />
      <Columns>
        <Sidebar>
          <Collapse><Tri d="left" c="#fff" s={8} /></Collapse>
          <Logo>
            <svg width="152" height="32" viewBox="0 0 152 32">
              <path d="M3.500 8A13 13 0 1 0 26 8" fill="none" stroke="#fff" strokeWidth="2.600" />
              <rect x="9" y="5" width="3" height="17" fill="#b5c327" /><rect x="13" y="1" width="3" height="21" fill="#f09a00" /><rect x="17" y="3" width="3" height="19" fill="#2aabaa" />
              <text x="39" y="28" fill="#fff" fontFamily="Lato, sans-serif" fontSize="35" textLength="114" lengthAdjust="spacingAndGlyphs">LIITERI</text>
            </svg>
          </Logo>
          <NavItem $h={35}>Kartta</NavItem>
          <NavItem $sub>Haku</NavItem>
          <NavItem>Karttatasot</NavItem>
          <NavItem $active>Tilastot</NavItem>
          <NavItem $h={48}>{"Asemakaavojen\nseurantalomakkeet"}</NavItem>
          <NavItem>Palvelupaketit</NavItem>
          <Tools>
            {toolIcons.map((t, i) => (
              <Tool key={i} $active={t.on} $off={t.off}>{t.el && <svg width="32" height="32" viewBox="0 0 32 32">{t.el}</svg>}</Tool>
            ))}
            <Tool /><Tool />
          </Tools>
          <FootLinks>
            <div><span>Anna palautetta</span><span>Käyttöohjeet</span></div>
            <div><span>Tietosuojaohje</span><span>Aluemuutokset</span></div>
          </FootLinks>
        </Sidebar>

        <Work>
          <WorkHead>
            <Title>Tilastot</Title>
            <HeadIcons><BackArrow /><CloseIcon /></HeadIcons>
          </WorkHead>
          <WorkBody>
            <Steps>
              <Step><Chevron />1. Valitse alue</Step>
              <Step><Chevron />2. Valitse esitystaso</Step>
              <Step $h={38}><Chevron down />3. Valitse tilastot</Step>
              <Hint>Valitse haettavat tilastot listasta. Tilastot haetaan, kun olet painanut<br />alhaalta Laske. Olet valinnut 3 tilastoa.</Hint>
              <TreeTools><BoxBtn /><BoxBtn minus /></TreeTools>
              <Filter>Suodata</Filter>
              <Tree>
                <TreeRows>
                  {tree.map(([lv, ex, ck, label, it, info, track = 0.3], i) => (
                    <TreeRow key={i} $level={lv}>
                      <Branch>
                        {ex ? <svg width="9" height="12" viewBox="0 -3 9 12"><Expander open={ex === "-"} /></svg> : (
                          <svg width="16" height="21"><path d={`M1.500 0V${label === "Muu alue" ? 7 : 21}M1.500 7.500H12`} stroke="#888" strokeDasharray="1 1" fill="none" /></svg>
                        )}
                      </Branch>
                      <TreeCheck kind={ck} />
                      <TreeText $it={it} $track={track}>{label}</TreeText>
                      {info ? <TreeInfo>i</TreeInfo> : null}
                    </TreeRow>
                  ))}
                </TreeRows>
                <VBar><Tri d="up" /><Thumb $v $at={95} $len={63}><Grip v /></Thumb><Tri d="down" /></VBar>
                <HBar><Tri d="left" /><Thumb $at={18} $len={173}><Grip /></Thumb><Tri d="right" /></HBar>
              </Tree>
              <Step><Chevron />4. Valitse vuodet</Step>
              <Actions>
                <Button $w={68} $gap={8} $primary>
                  <svg width="12" height="12" viewBox="0 0 12 12"><path d="M6 0V12M0 6H12" stroke="#fff" strokeWidth="3.400" /></svg>Laske
                </Button>
                <Button $w={139} $gap={8}>
                  <svg width="12" height="12" viewBox="0 0 12 12"><path d="M1.500 1.500L10.500 10.500M10.500 1.500L1.500 10.500" stroke="#fff" strokeWidth="3.400" /></svg>Tyhjennä valinnat
                </Button>
              </Actions>
              <Links>
                <LinkRow><ChartIcon c={CYAN} w={13} h={12} /><span>Luo diagrammi &gt;</span><span>Lataa tiedostona &gt;</span></LinkRow>
                <LinkRow><PrintIcon c={CYAN} /><span>Tulosta teemakartta &gt;</span></LinkRow>
              </Links>
            </Steps>

            <Table>
              <Group>Uudet pientalot asemakaava-alueilla ja niiden lievealueilla<br />Prosentti</Group>
              <HeadRow>
                <FirstCell>
                  <Select>Kunnittain<SelectBtn><Tri d="down" c="#000" s={8} /></SelectBtn></Select>
                  <svg width="24" height="18" viewBox="-5 -1 24 18"><UpCircle /></svg>
                </FirstCell>
                {["Asemakaava-alue", "Asemakaavan lievealu...", "Muu alue"].map((t, i) => (
                  <ColHead key={t} $hot={i === 1}>
                    <div>{t}</div><div>[%]</div><div>2017</div>
                    <ImgIcon />
                    <ColTools><TrashIcon /><SortIcon /><BarsIcon /><ChartIcon w={16} h={14} /><Info $s={16}>i</Info></ColTools>
                  </ColHead>
                ))}
              </HeadRow>
              <ListWrap>
                <List>
                  <GroupRow><Expander open /><span>Arvot (311)</span></GroupRow>
                  {rows.map((r, i) => (
                    <Row key={r[0]} $odd={i % 2 === 0}>
                      <RowCheck><svg width="11" height="11"><path d="M2.500 5L5 8.500L9 1.500" fill="none" stroke="#4a5ca6" strokeWidth="1.900" /></svg></RowCheck>
                      {r.map((c, j) => <span key={j}>{c}</span>)}
                    </Row>
                  ))}
                </List>
                <VBar><Tri d="up" /><Thumb $v $at={18} $len={36}><Grip v /></Thumb><Tri d="down" /></VBar>
              </ListWrap>
              <Stats>
                {stats.map((s) => (
                  <Stat key={s[0]} $b={s[0] === "Summa"}>{s.map((c, j) => <span key={j}>{c}</span>)}</Stat>
                ))}
                <StatIcon $y={112}><BackArrow /></StatIcon>
                <StatIcon $y={114} $right><CloseIcon /></StatIcon>
              </Stats>
            </Table>
          </WorkBody>
        </Work>

        <MapPane>
          <MapDrawing />
          <Over $pos="left: 631px; top: 18px;">
            <svg width="34" height="31" viewBox="0 0 34 31">
              <path d="M17 1C21.500 1 23.500 4 23.300 8C23 12 20.500 15 20 18C22 21 32 20.500 33 29.500H1C2 20.500 12 21 14 18C13.500 15 11 12 10.700 8C10.500 4 12.500 1 17 1Z" fill="#2f2f2f" stroke="#eef8fd" strokeWidth=".8" />
            </svg>
          </Over>
          <Over $pos="left: 646px; top: 72px;">
            <svg width="22" height="202" viewBox="0 0 22 202">
              <circle cx="10" cy="10" r="8" fill="#555" /><path d="M6 10H14M10 6V14" stroke="#fff" strokeWidth="2" />
              <rect x="8" y="21" width="6" height="159" rx="3" fill="#454545" />
              {Array.from({ length: 12 }, (_, i) => <path key={i} d={`M8 ${34.500 + i * 11}h6`} stroke="#8a8a8a" />)}
              <circle cx="12" cy="170" r="6.500" fill="#777" stroke="#f4f4f4" strokeWidth="2.600" />
              <circle cx="9.500" cy="192" r="8" fill="#555" /><path d="M5.500 192H13.500" stroke="#fff" strokeWidth="2.200" />
            </svg>
          </Over>
          <Over $pos="left: 10px; top: 884px;"><ScaleKm>100 km</ScaleKm><ScaleMi>100 mi</ScaleMi></Over>
          <MapLinks $pos="left: 40px; top: 940px;"><span>Käyttöehdot</span><span>Tietolähteet</span></MapLinks>
          <Legend $pos="left: 473px; top: 761px;">
            <LegendHead><Tri d="right" c="#fff" s={10} />Teemakartan selite</LegendHead>
            <LegendTitle>{"Uudet pientalot asemakaava-alueilla\nja niiden lievealueilla\nProsentti\nAsemakaavan lievealue 1 km\n[%]\n2017"}</LegendTitle>
            {legend.map(([c, t, n]) => (
              <LegendRow key={t}><Swatch $c={c} /><span>{t}</span><i>{n}</i></LegendRow>
            ))}
          </Legend>
        </MapPane>
      </Columns>
    </Page>
  );
}
